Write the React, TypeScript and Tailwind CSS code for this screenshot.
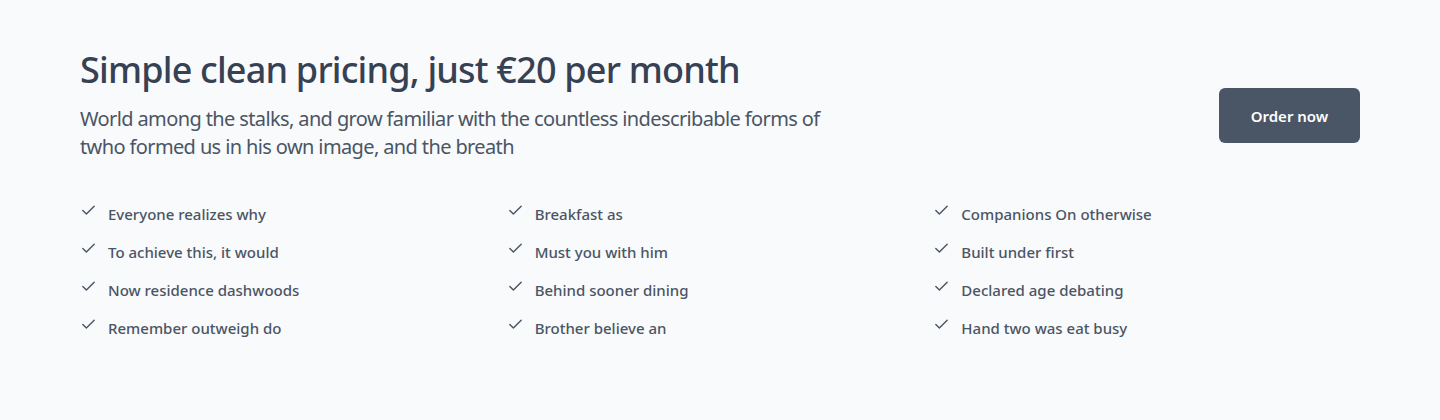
import { Check } from "lucide-react";

const columns: string[][] = [
  ["Everyone realizes why", "To achieve this, it would", "Now residence dashwoods", "Remember outweigh do"],
  ["Breakfast as", "Must you with him", "Behind sooner dining", "Brother believe an"],
  ["Companions On otherwise", "Built under first", "Declared age debating", "Hand two was eat busy"],
];

export default function App() {
  return (
    <div
      className="min-h-screen bg-gray-50 px-20 pt-[50px]"
      style={{ fontFamily: '"Noto Sans", "Open Sans", sans-serif' }}
    >
      <div className="flex items-start justify-between">
        <div>
          <h1 className="text-4xl font-medium leading-10 tracking-[-0.8px] text-gray-700">
            Simple clean pricing, just €20 per month
          </h1>
          <p className="mt-[15px] max-w-[760px] text-xl leading-7 tracking-[-0.62px] text-gray-600">
            World among the stalks, and grow familiar with the countless indescribable forms of twho formed us in his
            own image, and the breath
          </p>
        </div>
        <button className="mt-[38px] h-[55px] w-[141px] rounded-md bg-gray-600 pt-px text-[15px] font-semibold text-white">
          Order now
        </button>
      </div>

      <div className="mt-[41px] grid grid-cols-3">
        {columns.map((col, i) => (
          <ul key={i} className="flex flex-col gap-[14px]">
            {col.map((item) => (
              <li key={item} className="flex items-center gap-[11px] text-[15px] font-medium leading-6 text-gray-600">
                <Check className="-mt-2 h-[17px] w-[17px]" strokeWidth={2} />
                {item}
              </li>
            ))}
          </ul>
        ))}
      </div>
    </div>
  );
}
